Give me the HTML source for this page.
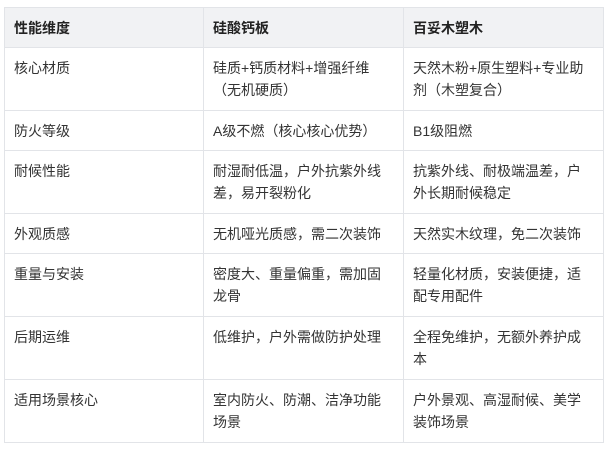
<!DOCTYPE html>
<html><head><meta charset="utf-8"><style>
body{margin:0;background:#fff;font-family:"Liberation Sans","Noto Sans CJK SC",sans-serif;font-size:14px;color:#333;}
table{position:absolute;left:4px;top:7px;border-collapse:collapse;width:600px;table-layout:fixed;}
td,th{border:1px solid #e2e4e8;padding:0 9px;vertical-align:top;line-height:22px;text-align:left;}
th{background:#f1f2f4;font-weight:bold;color:#222;vertical-align:middle;}
tr.h{height:40px}
tr.s td{height:40px;padding-top:9px;box-sizing:border-box}
tr.d td{height:63px;padding-top:9px;box-sizing:border-box}
</style></head><body>
<table>
<colgroup><col style="width:199px"><col style="width:200px"><col style="width:200px"></colgroup>
<tr class="h"><th>性能维度</th><th>硅酸钙板</th><th>百妥木塑木</th></tr>
<tr class="d"><td>核心材质</td><td>硅质+钙质材料+增强纤维（无机硬质）</td><td>天然木粉+原生塑料+专业助剂（木塑复合）</td></tr>
<tr class="s"><td>防火等级</td><td>A级不燃（核心核心优势）</td><td>B1级阻燃</td></tr>
<tr class="d"><td>耐候性能</td><td>耐湿耐低温，户外抗紫外线差，易开裂粉化</td><td>抗紫外线、耐极端温差，户外长期耐候稳定</td></tr>
<tr class="s"><td>外观质感</td><td>无机哑光质感，需二次装饰</td><td>天然实木纹理，免二次装饰</td></tr>
<tr class="d"><td>重量与安装</td><td>密度大、重量偏重，需加固龙骨</td><td>轻量化材质，安装便捷，适配专用配件</td></tr>
<tr class="d"><td>后期运维</td><td>低维护，户外需做防护处理</td><td>全程免维护，无额外养护成本</td></tr>
<tr class="d"><td>适用场景核心</td><td>室内防火、防潮、洁净功能场景</td><td>户外景观、高湿耐候、美学装饰场景</td></tr>
</table>
</body></html>
